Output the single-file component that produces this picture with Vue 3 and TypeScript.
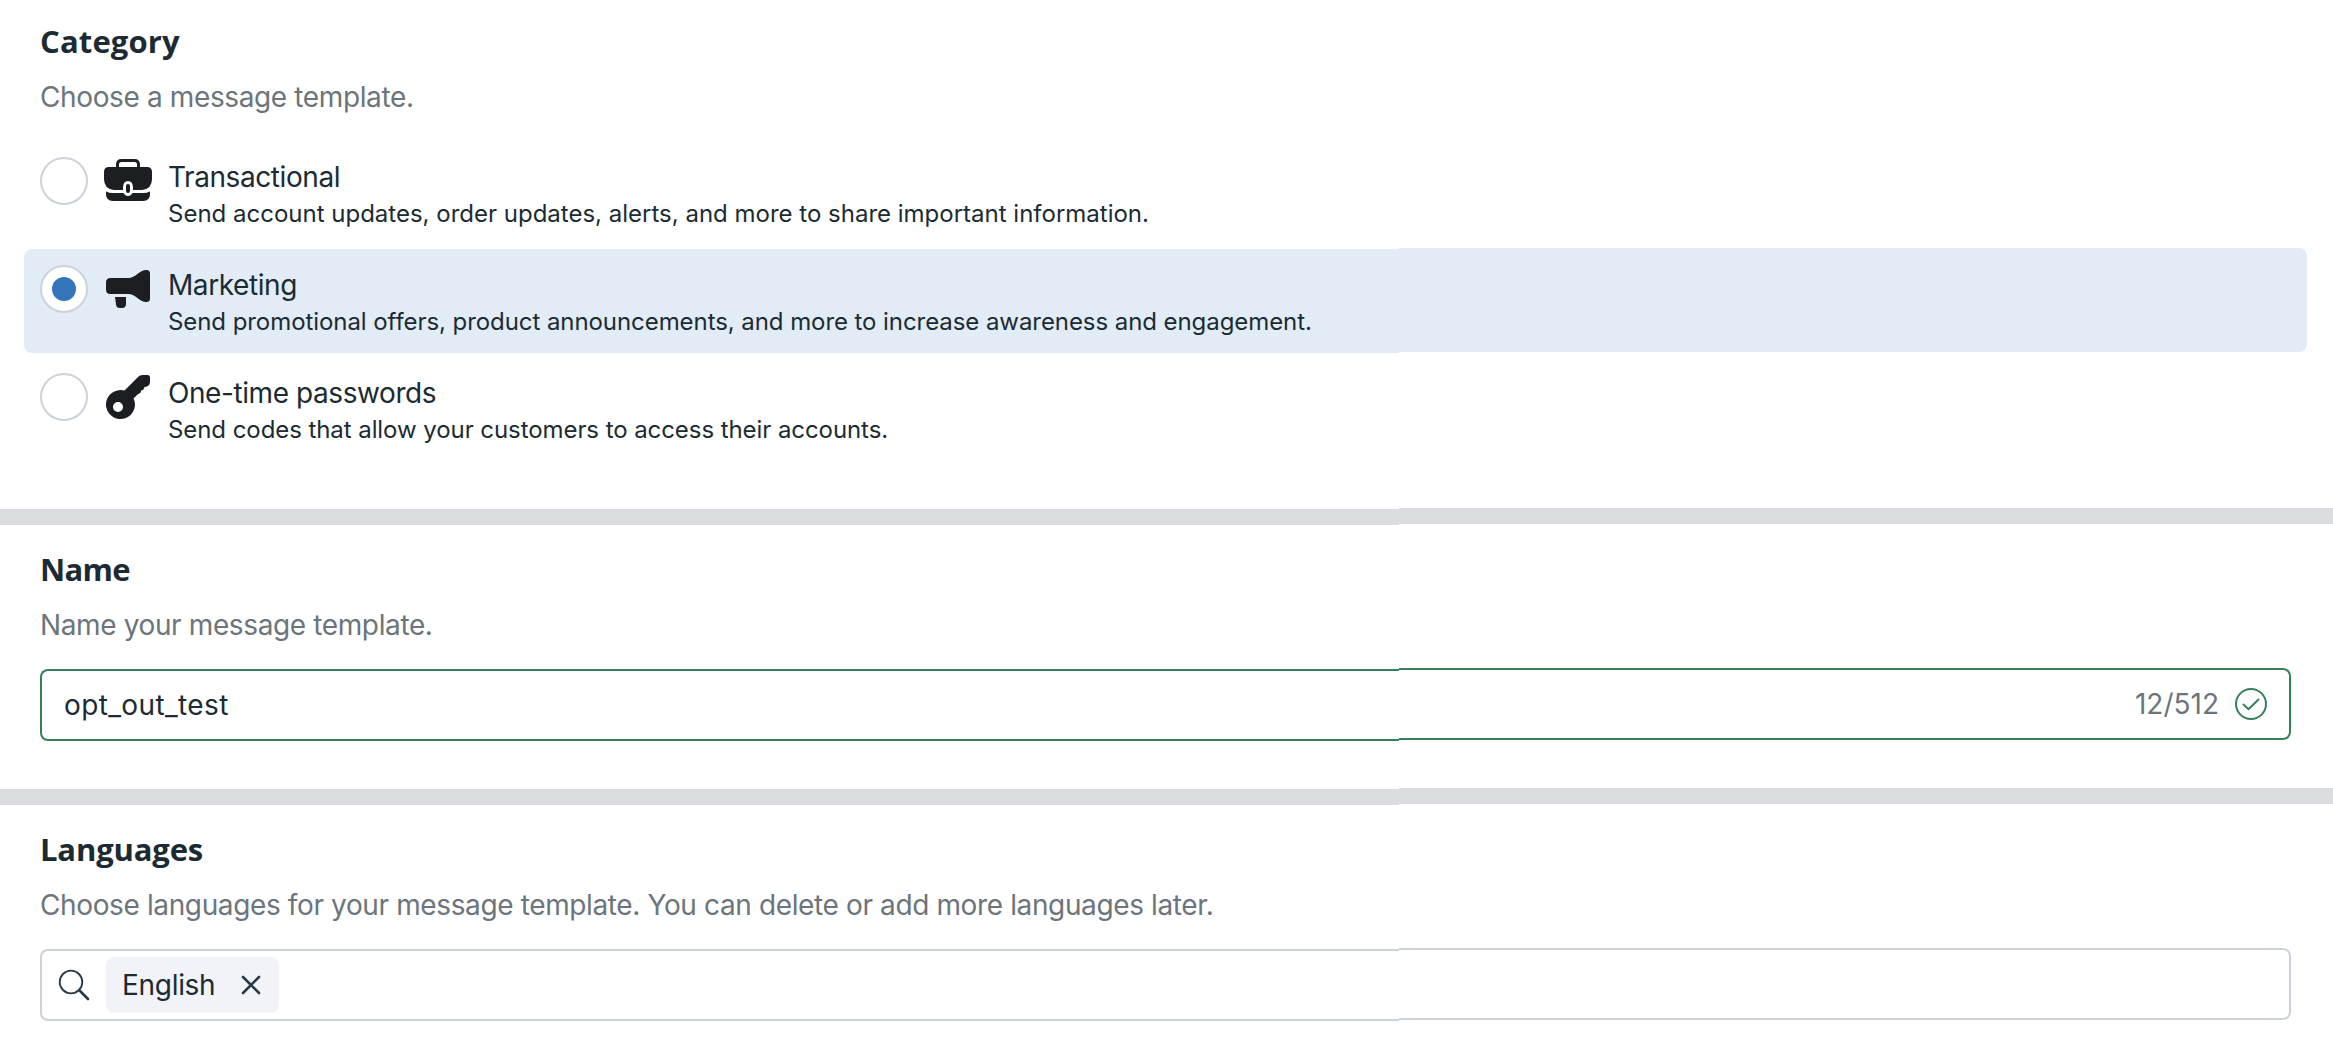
<script setup lang="ts">
import { ref } from 'vue'

interface Category {
  id: string
  title: string
  description: string
}

const categories: Category[] = [
  { id: 'transactional', title: 'Transactional', description: 'Send account updates, order updates, alerts, and more to share important information.' },
  { id: 'marketing', title: 'Marketing', description: 'Send promotional offers, product announcements, and more to increase awareness and engagement.' },
  { id: 'otp', title: 'One-time passwords', description: 'Send codes that allow your customers to access their accounts.' },
]
const selected = ref('marketing')
const name = ref('opt_out_test')
</script>

<template>
  <main class="page">
    <section class="section category">
      <h2>Category</h2>
      <p class="hint">Choose a message template.</p>
      <div class="options">
        <div v-for="c in categories" :key="c.id" class="option" @click="selected = c.id">
          <div class="half start" :class="{ on: selected === c.id }">
            <span class="radio"><span v-if="selected === c.id" class="dot"></span></span>
            <svg v-if="c.id === 'transactional'" class="icon" viewBox="0 0 48 48" fill="#1c1e21">
              <path d="M13.5 11V7.5Q13.5 3.5 17.5 3.5H30.5Q34.500 3.5 34.500 7.5V11" fill="none" stroke="#1c1e21" stroke-width="3" />
              <path d="M5 10H43Q48 10 48 15V22Q48 32 38 33H29V30Q28.500 24 24 24Q19.500 24 19 30V33H10Q0 32 0 22V15Q0 10 5 10Z" />
              <path d="M2 34.500Q5 36 9 36H19.500Q21 39 24 39Q27 39 28.500 36H39Q43 36 46 34.500V37Q46 44 39 44H9Q2 44 2 37Z" />
              <rect x="22" y="27" width="4" height="9" rx="2" />
            </svg>
            <svg v-else-if="c.id === 'marketing'" class="icon" viewBox="0 0 48 48" fill="#1c1e21">
              <path d="M6.500 13H24C32 13 35 5 42.500 5Q46 5 46 8.500V33.500Q46 37 42.500 37C35 37 32 29 24 29H6.500Q2 29 2 24.500V17.500Q2 13 6.500 13Z" />
              <path d="M11 32H22V39Q22 43 18 43H16Q12.300 43 12 39.500Z" />
            </svg>
            <svg v-else class="icon" viewBox="0 0 48 48" fill="#1c1e21">
              <path fill-rule="evenodd" d="M20.500 17.600L34 4Q36 2 38.500 2H43.500Q46 2 46 4.500V8.500Q46 13.500 40.500 14L39.500 16.500L37.300 17.500L36.300 20L33.800 21.200L29.500 25.500Q31 28 31 31.500A14.500 14.500 0 1 1 20.500 17.600ZM14 29A5 5 0 1 0 14 39A5 5 0 1 0 14 29Z" />
            </svg>
            <div class="copy">
              <div class="title">{{ c.title }}</div>
              <div class="desc">{{ c.description }}</div>
            </div>
          </div>
          <div class="half end" :class="{ on: selected === c.id }"></div>
        </div>
      </div>
    </section>

    <div class="divider"><i></i><i></i></div>

    <section class="section name">
      <h2>Name</h2>
      <p class="hint">Name your message template.</p>
      <div class="field valid">
        <div class="cell start value">{{ name }}</div>
        <div class="cell end">
          <span class="count">{{ name.length }}/512</span>
          <svg class="check" viewBox="0 0 32 32" fill="none" stroke="#35805a" stroke-width="2">
            <circle cx="16" cy="16" r="15" />
            <path d="M8.500 16.500L13.500 21.200L23.500 11.500" stroke-linecap="round" stroke-linejoin="round" />
          </svg>
        </div>
      </div>
    </section>

    <div class="divider"><i></i><i></i></div>

    <section class="section languages">
      <h2>Languages</h2>
      <p class="hint">Choose languages for your message template. You can delete or add more languages later.</p>
      <div class="field">
        <div class="cell start picker">
          <svg class="search" viewBox="0 0 32 32" fill="none" stroke="#283943">
            <circle cx="13" cy="13" r="11.300" stroke-width="1.800" />
            <path d="M21.500 21.500L30 30" stroke-width="2.600" stroke-linecap="round" />
          </svg>
          <span class="chip">
            <span>English</span>
            <svg class="close" viewBox="0 0 20 20" fill="none" stroke="#283943" stroke-width="2.600" stroke-linecap="round">
              <path d="M2 2L18 18M18 2L2 18" />
            </svg>
          </span>
        </div>
        <div class="cell end"></div>
      </div>
    </section>
  </main>
</template>

<style>
body {
  margin: 0;
  background: #fff;
}
</style>

<style scoped>
.page {
  width: 2333px;
  height: 1063px;
  overflow: hidden;
  background: #fff;
  color: #1c2b33;
  font-family: Inter, "Liberation Sans", sans-serif;
  font-size: 28px;
}
.section {
  box-sizing: border-box;
  padding: 24px 42px 0 40px;
}
.category {
  height: 509px;
  padding-top: 21px;
}
.name {
  height: 264px;
}
h2 {
  margin: 0;
  font: 700 31px/40px "Open Sans", sans-serif;
}
.category h2 {
  letter-spacing: 0.15px;
}
.name h2 {
  letter-spacing: -0.7px;
}
.languages h2 {
  letter-spacing: -0.15px;
}
.hint {
  margin: 18px 0 26px;
  line-height: 36px;
  letter-spacing: -0.375px;
  color: #6c757c;
}
.options {
  display: flex;
  flex-direction: column;
  gap: 4px;
  margin: 0 -16px;
}
.option {
  display: flex;
  height: 104px;
}
.half {
  box-sizing: border-box;
  height: 104px;
}
.half.start {
  display: flex;
  width: 1375px;
  padding: 16px;
  border-radius: 8px 0 0 8px;
}
.half.end {
  flex: 1;
  margin-top: -1px;
  border-radius: 0 8px 8px 0;
}
.half.on {
  background: #e2ecf6;
}
.radio {
  box-sizing: border-box;
  display: flex;
  align-items: center;
  justify-content: center;
  width: 48px;
  height: 48px;
  border: 2px solid #cbd2d9;
  border-radius: 50%;
  background: #fff;
}
.dot {
  width: 24px;
  height: 24px;
  border-radius: 50%;
  background: #3575bb;
}
.icon {
  width: 48px;
  height: 48px;
  margin: 0 16px;
}
.copy {
  padding-top: 2px;
  white-space: nowrap;
}
.title {
  line-height: 36px;
  letter-spacing: -0.42px;
}
.desc {
  margin-top: 3px;
  font-size: 24px;
  line-height: 32px;
  letter-spacing: -0.07px;
}
.option:first-child .desc {
  letter-spacing: 0;
}
.divider {
  display: flex;
  height: 16px;
}
.divider i {
  width: 1399px;
  height: 16px;
  background: #dbdce0;
}
.divider i + i {
  flex: 1;
  margin-top: -1px;
}
.field {
  --line: #cbd2d9;
  display: flex;
  height: 72px;
}
.field.valid {
  --line: #35805a;
}
.cell {
  box-sizing: border-box;
  display: flex;
  align-items: center;
  height: 72px;
  border: 2px solid var(--line);
}
.cell.start {
  width: 1359px;
  border-right: 0;
  border-radius: 8px 0 0 8px;
}
.cell.end {
  flex: 1;
  justify-content: flex-end;
  margin-top: -1px;
  padding-right: 22px;
  border-left: 0;
  border-radius: 0 8px 8px 0;
}
.value {
  padding-left: 22px;
  letter-spacing: 0.37px;
}
.count {
  color: #6c757c;
}
.check {
  width: 32px;
  height: 32px;
  margin-left: 16px;
}
.picker {
  padding-left: 16px;
}
.search {
  width: 32px;
  height: 32px;
}
.chip {
  box-sizing: border-box;
  display: flex;
  align-items: center;
  justify-content: space-between;
  width: 173px;
  height: 56px;
  margin-left: 16px;
  padding: 0 18px 0 16px;
  border-radius: 8px;
  background: #f2f3f8;
  letter-spacing: -0.3px;
}
.close {
  width: 20px;
  height: 20px;
}
</style>
